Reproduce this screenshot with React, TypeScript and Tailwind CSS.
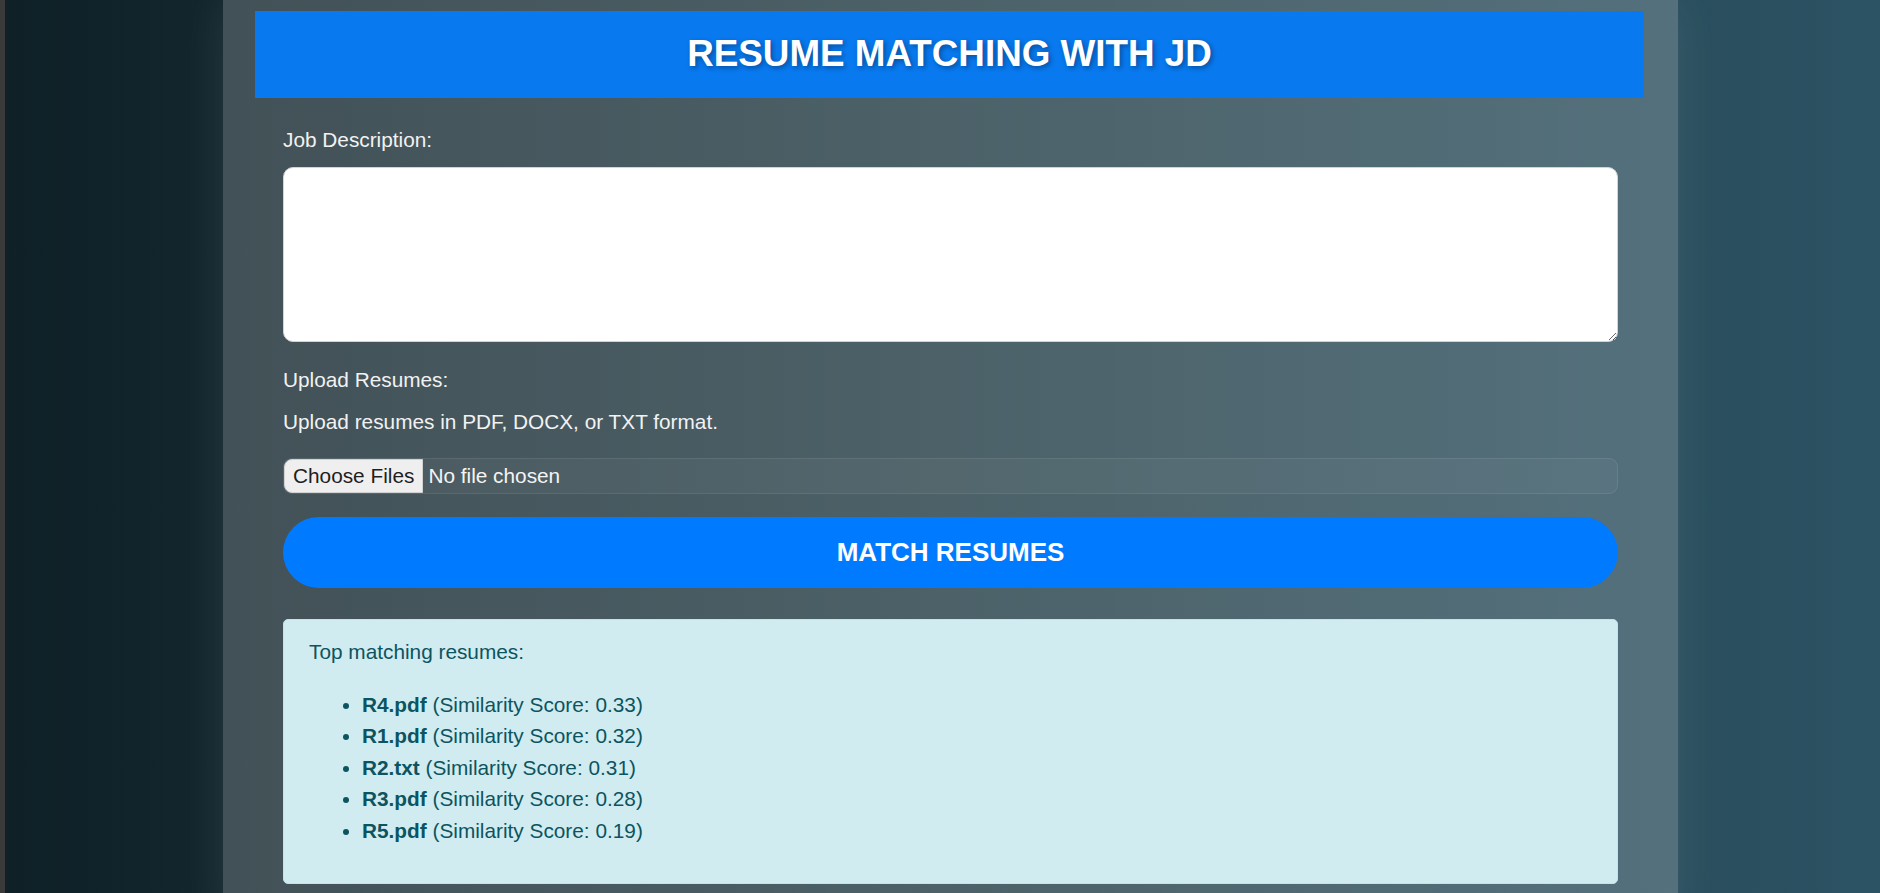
import { useState } from "react";

const results = [
  { name: "R4.pdf", score: "0.33" },
  { name: "R1.pdf", score: "0.32" },
  { name: "R2.txt", score: "0.31" },
  { name: "R3.pdf", score: "0.28" },
  { name: "R5.pdf", score: "0.19" },
];

export default function App() {
  const [jd, setJd] = useState("");

  return (
    <div
      className="flex min-h-screen w-full bg-gradient-to-r from-[#0f2027] via-[#203a43] to-[#2c5364] overflow-hidden"
      style={{ fontFamily: '"Liberation Sans", Arial, sans-serif' }}
    >
      <div className="w-[5px] shrink-0 bg-[#3a3a3a]" />

      <main className="ml-[218px] w-[1455px] shrink-0 bg-white/20 shadow-[0_0_45px_rgba(255,255,255,0.09)] px-[60px] pt-[11px] pb-[40px] flex flex-col">
        <header className="-ml-[28px] -mr-[26px] h-[87px] bg-[#0879ef] flex items-center justify-center">
          <h1 className="text-[36.8px] font-bold text-white leading-none [text-shadow:2px_2px_5px_rgba(0,0,0,0.35)]">
            RESUME MATCHING WITH JD
          </h1>
        </header>

        <label htmlFor="jd" className="mt-[26px] text-[20.8px] leading-[31px] text-[#f2f2f2]">
          Job Description:
        </label>
        <textarea
          id="jd"
          value={jd}
          onChange={(e) => setJd(e.target.value)}
          className="mt-[12px] h-[175px] w-full rounded-[10px] border border-[#cfd4d8] bg-white p-3 text-[18px] text-gray-800 outline-none"
        />

        <div className="mt-[22px] text-[20.8px] leading-[31px] text-[#f2f2f2]">Upload Resumes:</div>
        <p className="mt-[11px] text-[20.8px] leading-[31px] text-[#f2f2f2]">
          Upload resumes in PDF, DOCX, or TXT format.
        </p>

        <label className="mt-[21px] h-[36px] flex items-stretch rounded-[9px] border border-white/[0.08] bg-white/[0.04] cursor-pointer">
          <input type="file" multiple className="hidden" />
          <span className="flex items-center rounded-l-[8px] border border-[#d0d0d0] bg-[#efefef] px-[8px] text-[20.8px] text-[#1e1e1e]">
            Choose Files
          </span>
          <span className="flex items-center pl-[5px] text-[20.8px] text-[#f4f4f4]">No file chosen</span>
        </label>

        <button className="mt-[23px] h-[71px] w-full rounded-full bg-[#007bff] text-[26px] font-bold text-white">
          MATCH RESUMES
        </button>

        <section className="mt-[31px] rounded-[5px] border border-[#bee5eb] bg-[#d1ecf1] px-[25px] py-[16px] text-[20.8px] leading-[31.5px] text-[#0c5460]">
          <p>Top matching resumes:</p>
          <ul className="my-[21px] list-disc pl-[53px]">
            {results.map((r) => (
              <li key={r.name}>
                <strong className="font-bold">{r.name}</strong> (Similarity Score: {r.score})
              </li>
            ))}
          </ul>
        </section>
      </main>
    </div>
  );
}
